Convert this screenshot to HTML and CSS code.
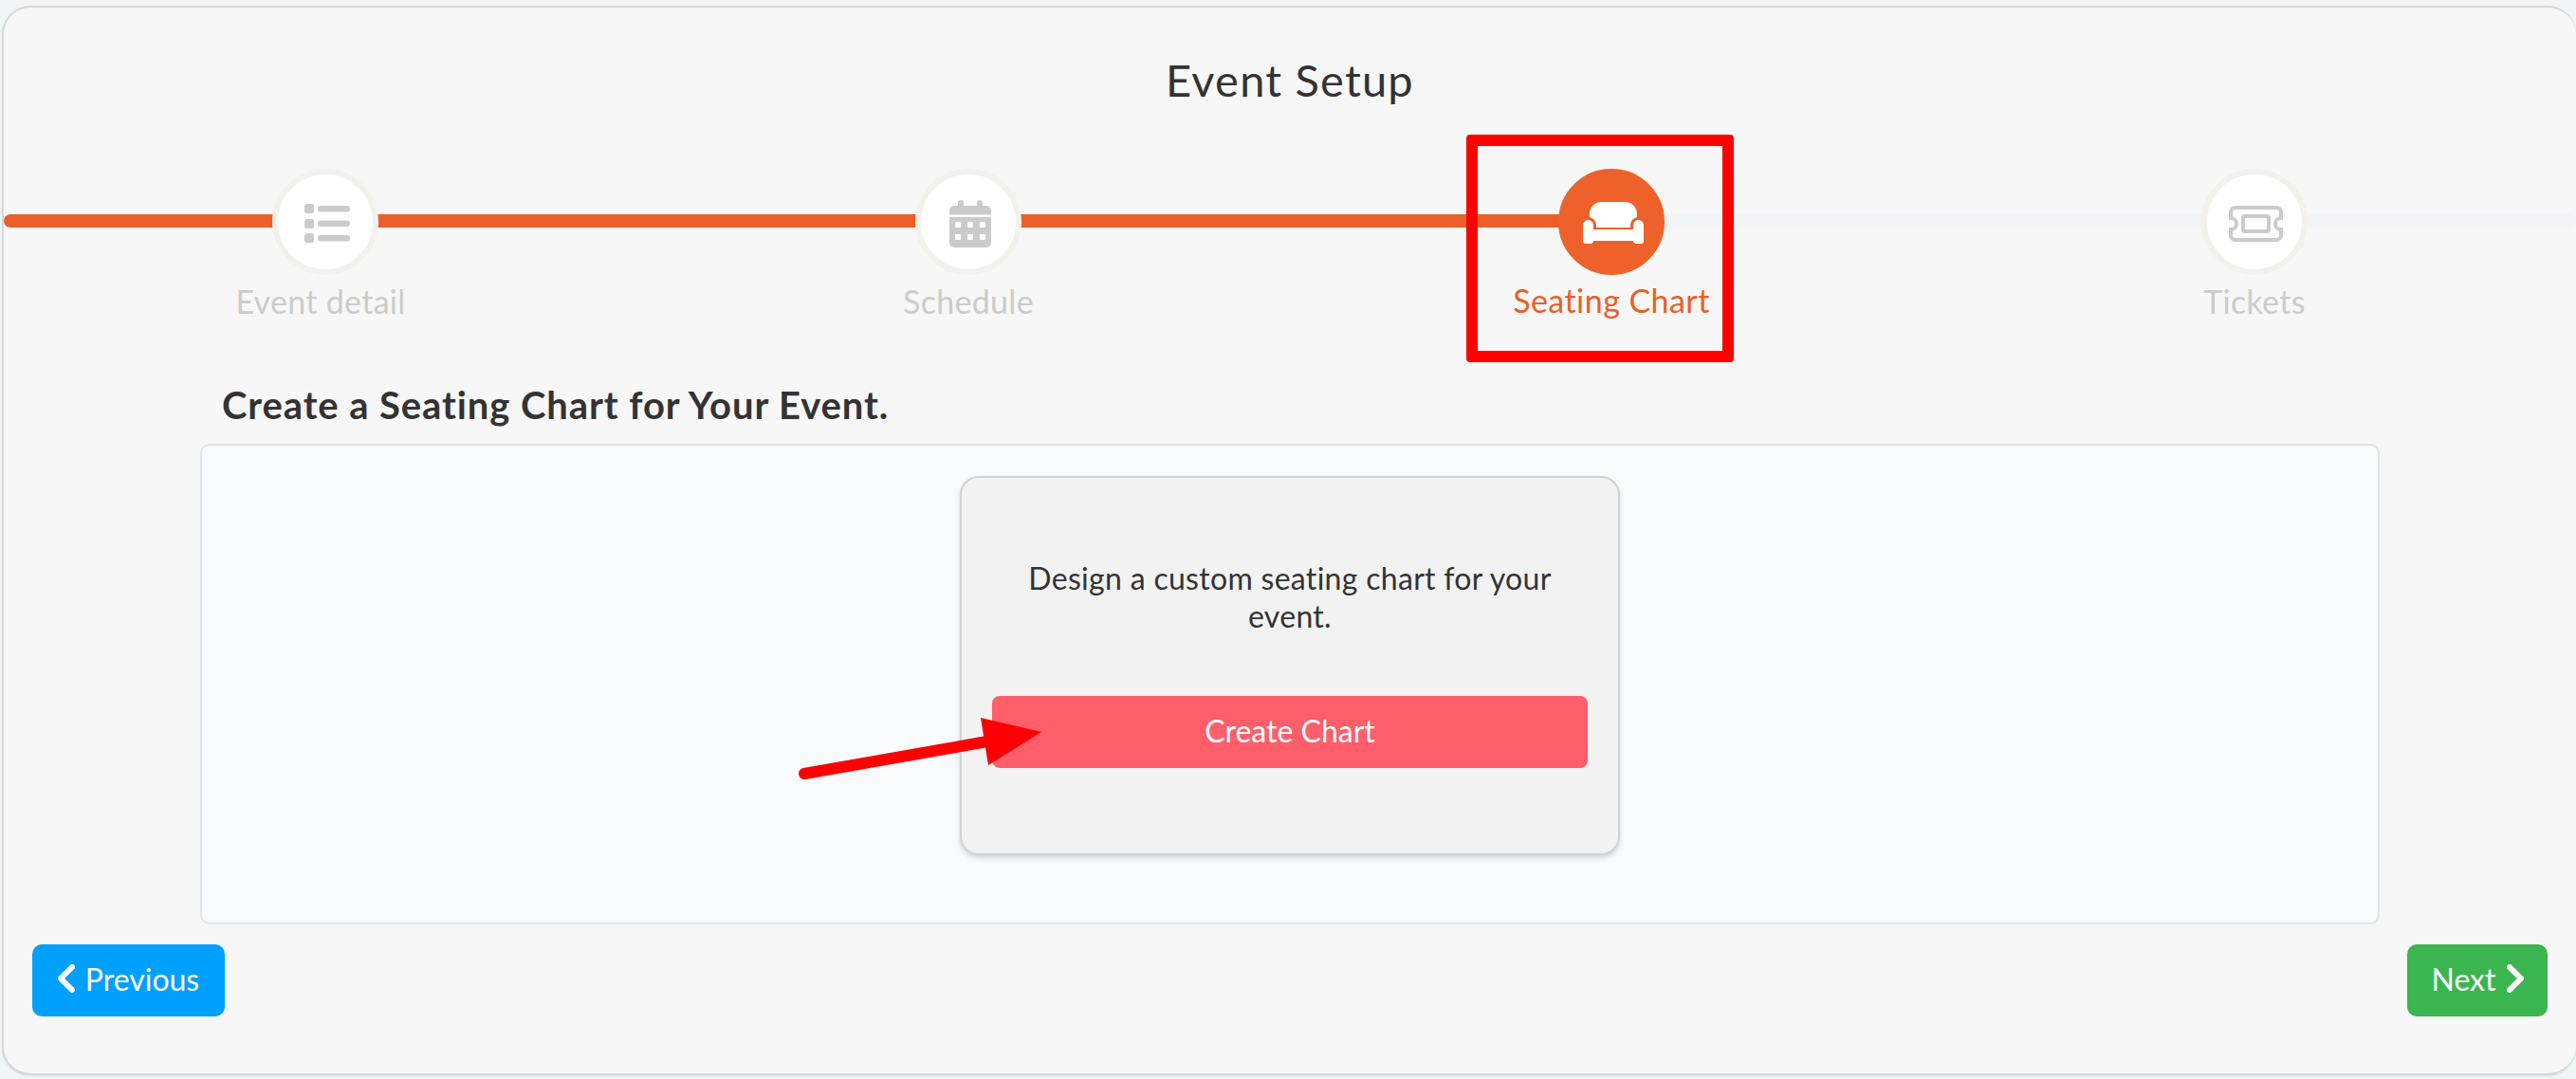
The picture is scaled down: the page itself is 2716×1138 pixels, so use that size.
FILE: index.html
```html
<!DOCTYPE html>
<html lang="en">
<head>
  <meta charset="UTF-8">
  <title>Event Setup</title>
  <link rel="stylesheet" href="styles.css">
</head>
<body>
  <div class="wizard">
    <h1 class="wizard-title">Event Setup</h1>

    <div class="stepper">
      <div class="track"></div>
      <div class="track-fill"></div>

      <div class="step step-first">
        <div class="step-icon">
          <svg width="48" height="41" viewBox="0 0 48 41" fill="#cbcbcb">
            <rect x="0" y="0" width="10" height="10" rx="2.5"/>
            <rect x="0" y="16" width="10" height="10" rx="2.5"/>
            <rect x="0" y="31" width="10" height="10" rx="2.5"/>
            <rect x="14" y="2" width="34" height="6.5" rx="3.2"/>
            <rect x="14" y="17.5" width="34" height="6.5" rx="3.2"/>
            <rect x="14" y="33" width="34" height="6.5" rx="3.2"/>
          </svg>
        </div>
        <div class="step-label">Event detail</div>
      </div>

      <div class="step">
        <div class="step-icon">
          <svg width="44" height="50" viewBox="0 0 44 50" fill="#cbcbcb">
            <path d="M9 3a3 3 0 0 1 6 0v3h14V3a3 3 0 0 1 6 0v3h4a5 5 0 0 1 5 5v4.500H0V11a5 5 0 0 1 5-5h4z"/>
            <path fill-rule="evenodd" d="M0 18h44v27a5 5 0 0 1-5 5H5a5 5 0 0 1-5-5zM7 23a1 1 0 0 0-1 1v4a1 1 0 0 0 1 1h4a1 1 0 0 0 1-1v-4a1 1 0 0 0-1-1zM20 23a1 1 0 0 0-1 1v4a1 1 0 0 0 1 1h4a1 1 0 0 0 1-1v-4a1 1 0 0 0-1-1zM33 23a1 1 0 0 0-1 1v4a1 1 0 0 0 1 1h4a1 1 0 0 0 1-1v-4a1 1 0 0 0-1-1zM7 36a1 1 0 0 0-1 1v4a1 1 0 0 0 1 1h4a1 1 0 0 0 1-1v-4a1 1 0 0 0-1-1zM20 36a1 1 0 0 0-1 1v4a1 1 0 0 0 1 1h4a1 1 0 0 0 1-1v-4a1 1 0 0 0-1-1zM33 36a1 1 0 0 0-1 1v4a1 1 0 0 0 1 1h4a1 1 0 0 0 1-1v-4a1 1 0 0 0-1-1z"/>
          </svg>
        </div>
        <div class="step-label">Schedule</div>
      </div>

      <div class="step step-active">
        <div class="step-icon">
          <svg width="64" height="44" viewBox="0 0 64 44" fill="#fff">
            <path d="M5.500 19C8.500 19 11 21.500 11 25V29H53V25C53 21.500 55.500 19 58.500 19C61.500 19 64 21.500 64 25V41C64 43 63 44 61 44H56C54 44 53 43 53 41H11C11 43 10 44 8 44H3C1 44 0 43 0 41V25C0 21.500 2.500 19 5.500 19z"/>
            <path d="M14 27V25C14 20 11 17 7 16C6 7 11 0 20 0H44C53 0 58 7 57 16C53 17 50 20 50 25V27z"/>
          </svg>
        </div>
        <div class="step-label">Seating Chart</div>
        <div class="step-marker"></div>
      </div>

      <div class="step">
        <div class="step-icon">
          <svg width="57" height="38" viewBox="0 0 57 38" fill="none" stroke="#cbcbcb" stroke-width="4">
            <path d="M7 2h43a5 5 0 0 1 5 5v6a6 6 0 0 0 0 12v6a5 5 0 0 1-5 5H7a5 5 0 0 1-5-5v-6a6 6 0 0 0 0-12V7a5 5 0 0 1 5-5z"/>
            <rect x="15" y="11" width="27" height="16" rx="1.500"/>
          </svg>
        </div>
        <div class="step-label">Tickets</div>
      </div>
    </div>

    <h2 class="section-title">Create a Seating Chart for Your Event.</h2>

    <div class="panel">
      <div class="chart-card">
        <p class="chart-text">Design a custom seating chart for your event.</p>
        <button class="btn btn-create">Create Chart</button>
      </div>
      <svg class="arrow" width="270" height="90" viewBox="0 0 270 90">
        <path d="M7 59 L200 25" stroke="#f00" stroke-width="12" stroke-linecap="round"/>
        <path d="M193 0 L257 15 L201 50z" fill="#f00"/>
      </svg>
    </div>

    <div class="wizard-nav">
      <button class="btn btn-prev">
        <svg width="18" height="30" viewBox="0 0 18 30" fill="none" stroke="#fff" stroke-width="6" stroke-linecap="round" stroke-linejoin="round"><path d="M15 3 L3 15 L15 27"/></svg>
        Previous
      </button>
      <button class="btn btn-next">
        Next
        <svg width="18" height="30" viewBox="0 0 18 30" fill="none" stroke="#fff" stroke-width="6" stroke-linecap="round" stroke-linejoin="round"><path d="M3 3 L15 15 L3 27"/></svg>
      </button>
    </div>
  </div>
</body>
</html>
```

FILE: styles.css
```css
* { box-sizing: border-box; }
body {
  margin: 0;
  background: #f1f5f5;
  font-family: "Lato", "Open Sans", sans-serif;
  color: #333;
}
.wizard {
  margin: 6px 0 4px 2px;
  height: 1128px;
  background: #f7f7f7;
  border: 2px solid #d6d8d8;
  border-right: none;
  border-radius: 30px;
  box-shadow: 0 1px 2px rgba(0, 0, 0, 0.1);
}
.wizard-title {
  margin: 0;
  padding-top: 48px;
  height: 170px;
  text-align: center;
  font-size: 47px;
  line-height: 56px;
  letter-spacing: 1.2px;
  font-weight: 400;
}

.stepper {
  position: relative;
  display: grid;
  grid-template-columns: repeat(4, 1fr);
}
.track, .track-fill {
  position: absolute;
  left: 0;
  top: 48px;
  height: 14px;
  border-radius: 7px;
}
.track { width: 100%; background: #f1f5f5; }
.track-fill { width: 62.5%; background: #ec5e27; border-radius: 7px 0 0 7px; }

.step {
  position: relative;
  display: flex;
  flex-direction: column;
  align-items: center;
}
.step-icon {
  position: relative;
  width: 112px;
  height: 112px;
  border-radius: 50%;
  background: #fff;
  border: 6px solid #f2f1ed;
  display: flex;
  align-items: center;
  justify-content: center;
}
.step-icon svg { margin: 3px 0 0 3px; flex: none; }
.step-label {
  margin-top: 8px;
  font-size: 34px;
  line-height: 40px;
  letter-spacing: 0.3px;
  color: #cbcbcb;
}
.step-first .step-label { margin-right: 10px; }
.step-active .step-icon { background: #ee612a; border-color: #ee612a; }
.step-active .step-icon svg { margin-top: 1px; }
.step-active .step-label { color: #ec5e27; margin-top: 7px; letter-spacing: 0.45px; }
.step-marker {
  position: absolute;
  left: 186px;
  top: -36px;
  width: 282px;
  height: 240px;
  border: 12px solid #f00;
  border-radius: 4px;
}

.section-title {
  margin: 0;
  padding: 65px 0 0 230px;
  height: 130px;
  font-size: 40px;
  line-height: 48px;
  letter-spacing: 0.9px;
  font-weight: 700;
}

.panel {
  position: relative;
  margin: 0 207px;
  height: 507px;
  padding-top: 32px;
  background: #f9fafc;
  border: 2px solid #e0e3e8;
  border-radius: 10px;
}
.chart-card {
  width: 696px;
  height: 400px;
  margin: 0 auto;
  padding: 86px 32px 0;
  background: #f2f2f2;
  border: 2px solid #d2d2d2;
  border-radius: 20px;
  box-shadow: 0 3px 5px rgba(0, 0, 0, 0.15);
  text-align: center;
}
.chart-text {
  margin: 0 0 64px;
  padding: 0 30px;
  font-size: 32px;
  line-height: 40px;
  letter-spacing: 0.3px;
}
.arrow {
  position: absolute;
  left: 628px;
  top: 287px;
}

.btn {
  border: none;
  color: #fff;
  font-family: inherit;
  font-size: 32px;
  height: 76px;
  padding: 0 0 4px;
  border-radius: 10px;
  display: inline-flex;
  align-items: center;
  justify-content: center;
  gap: 11px;
}
.btn-create { width: 628px; background: #ff5e6a; border-radius: 8px; }
.btn-prev { width: 203px; background: #00a0ff; }
.btn-next { width: 148px; background: #3bb54f; }
.wizard-nav {
  display: flex;
  justify-content: space-between;
  padding: 21px 30px 0;
}
```
